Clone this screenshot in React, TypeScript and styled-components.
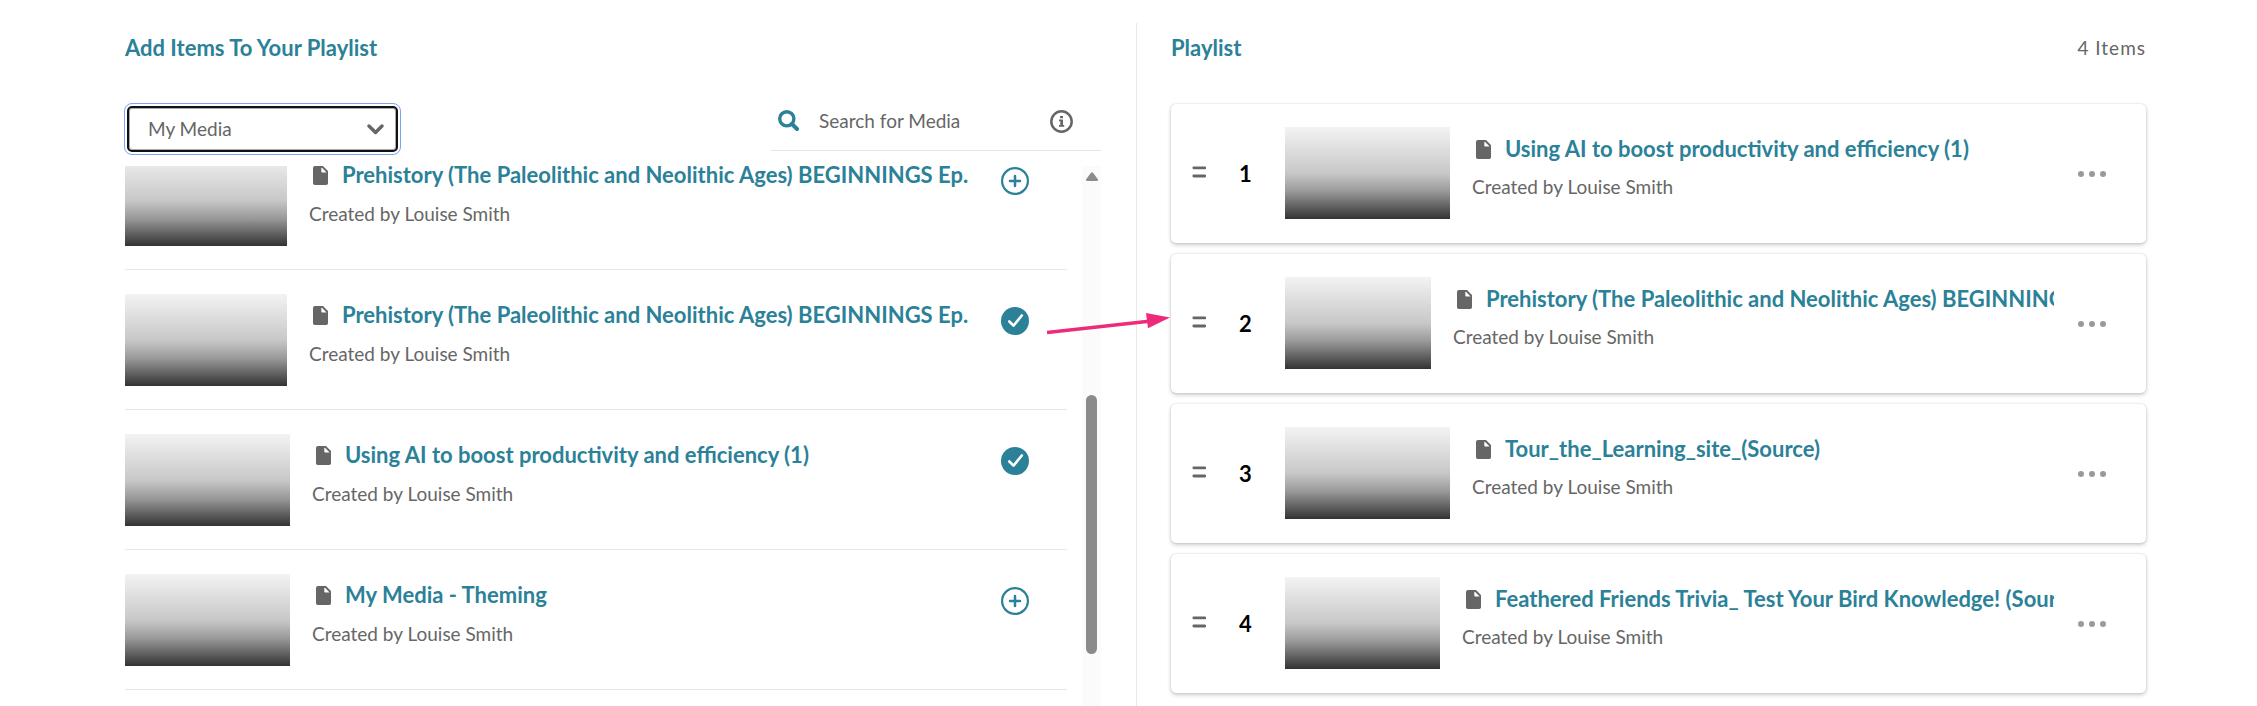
import React from "react";
import styled, { createGlobalStyle } from "styled-components";

const GlobalStyle = createGlobalStyle`
  * { box-sizing: border-box; }
  body {
    margin: 0;
    background: #fff;
    color: #666;
    font-family: Lato, "Liberation Sans", sans-serif;
    font-size: 19px;
    line-height: 24px;
  }
  button, input, select { font: inherit; color: inherit; }
`;

const teal = "#2b8198";
const line = "#e8e8e8";

const Page = styled.main`
  display: grid;
  grid-template-columns: minmax(0, 1fr) minmax(0, 1fr);
  min-height: 100vh;
  padding: 23px 110px 0 125px;
`;

const LibraryPane = styled.section`
  position: relative;
  display: flex;
  flex-direction: column;
  padding-right: 35px;
`;

const PlaylistPane = styled.section`
  border-left: 1px solid ${line};
  padding: 0 1px 13px 34px;
`;

const PaneHeader = styled.header`
  display: flex;
  align-items: flex-start;
  justify-content: space-between;
  height: 81px;
  padding-top: 11px;
`;

const Heading = styled.h2`
  margin: 0;
  color: ${teal};
  font-size: 22px;
  line-height: 28px;
`;

const ItemCount = styled.span`
  line-height: 28px;
  letter-spacing: 1px;
`;

const Toolbar = styled.div`
  display: flex;
  justify-content: space-between;
  align-items: flex-start;
  height: 62px;
`;

const SourcePicker = styled.label`
  position: relative;
  display: block;
  width: 271px;
  height: 46px;
  margin: 2px 0 0 2px;
`;

const SourceSelect = styled.select`
  display: block;
  width: 100%;
  height: 100%;
  padding: 0 19px;
  appearance: none;
  background: #fff;
  border: 2px solid #111;
  border-radius: 5px;
  box-shadow: inset 0 0 0 1px #aaa;
  outline: 1px solid #7ba4f5;
  outline-offset: 2px;
`;

const PickerChevron = styled.svg`
  position: absolute;
  right: 14px;
  top: 18px;
  pointer-events: none;
`;

const SearchBox = styled.label`
  display: flex;
  align-items: center;
  width: 330px;
  height: 47px;
  padding: 0 28px 12px 7px;
  border-bottom: 1px solid ${line};
`;

const SearchInput = styled.input`
  flex: 1;
  min-width: 0;
  margin-left: 20px;
  padding: 0;
  border: 0;
  outline: 0;
  background: transparent;
  &::placeholder { color: #666; opacity: 1; }
`;

const PlainButton = styled.button`
  display: flex;
  flex: none;
  padding: 0;
  border: 0;
  background: none;
  cursor: pointer;
`;

const LibraryBody = styled.div`
  display: flex;
  flex: 1;
  justify-content: space-between;
`;

const MediaViewport = styled.div`
  flex: 1;
  min-width: 0;
  margin-right: 15px;
  overflow: hidden;
`;

const MediaList = styled.ul`
  margin: -36px 0 0;
  padding: 0;
  list-style: none;
`;

const MediaRow = styled.li`
  display: flex;
  align-items: flex-start;
  padding: 24px 38px 23px 0;
  border-bottom: 1px solid ${line};
`;

const Thumb = styled.div<{ $w: number }>`
  flex: none;
  width: ${(p) => p.$w}px;
  height: 92px;
  background: linear-gradient(#f3f3f3 0%, #c8c8c8 50%, #999 70%, #333 100%);
`;

const Details = styled.div`
  flex: 1;
  min-width: 0;
  margin-left: 22px;
  padding-top: 7px;
`;

const TitleLine = styled.h3`
  display: flex;
  align-items: center;
  gap: 14px;
  margin: 0;
  padding-left: 4px;
  font-size: 22px;
  line-height: 28px;
`;

const TitleLink = styled.a`
  flex: 1;
  min-width: 0;
  overflow: hidden;
  white-space: nowrap;
  color: ${teal};
  text-decoration: none;
`;

const Author = styled.p`
  margin: 13px 0 0;
`;

const ToggleButton = styled(PlainButton)`
  margin: 13px 0 0 24px;
`;

const ScrollTrack = styled.div`
  display: flex;
  flex-direction: column;
  align-items: center;
  width: 19px;
  padding-top: 6px;
  background: #fbfbfb;
`;

const ScrollThumb = styled.div`
  width: 11px;
  height: 259px;
  margin-top: 214px;
  border-radius: 6px;
  background: #8b8b8b;
`;

const CardList = styled.ol`
  display: flex;
  flex-direction: column;
  gap: 11px;
  margin: 0;
  padding: 0;
  list-style: none;
`;

const Card = styled.li`
  display: flex;
  align-items: flex-start;
  padding: 23px 40px 24px 21px;
  border-radius: 5px;
  background: #fff;
  box-shadow: 0 2px 4px rgba(0, 0, 0, 0.2), 0 0 2px rgba(0, 0, 0, 0.16);
`;

const DragButton = styled(PlainButton)`
  margin-top: 39px;
  cursor: grab;
`;

const Position = styled.span`
  width: 79px;
  padding-top: 33px;
  text-align: center;
  color: #000;
  font-size: 22px;
  font-weight: 700;
  line-height: 28px;
`;

const CardDetails = styled(Details)`
  padding-top: 8px;
`;

const CardAuthor = styled(Author)`
  margin-top: 12px;
`;

const MoreButton = styled(PlainButton)`
  margin: 44px 0 0 24px;
`;

const Arrow = styled.svg`
  position: absolute;
  right: -36px;
  top: 284px;
  pointer-events: none;
`;

const FileGlyph = styled.svg`
  flex: none;
`;

const FileIcon = () => (
  <FileGlyph width="15" height="19" viewBox="0 0 15 19" aria-hidden="true">
    <path fill="#666" fillRule="evenodd" d="M2 0h8l5 5v12.200a1.800 1.800 0 0 1-1.800 1.800H1.800A1.800 1.800 0 0 1 0 17.200V2A2 2 0 0 1 2 0Zm6.300 2v3.200c0 .8.500 1.300 1.300 1.300h4L9 1.800Z" />
  </FileGlyph>
);

const AddIcon = () => (
  <svg width="28" height="28" viewBox="0 0 28 28" fill="none" stroke={teal} strokeWidth="2.200" aria-hidden="true">
    <circle cx="14" cy="14" r="12.900" />
    <path d="M14 9v10M9 14h10" strokeWidth="2.500" strokeLinecap="round" />
  </svg>
);

const AddedIcon = () => (
  <svg width="28" height="28" viewBox="0 0 28 28" fill="none" aria-hidden="true">
    <circle cx="14" cy="14" r="14" fill={teal} />
    <path d="M8.300 14.500l4.200 4.200 8.300-10.200" stroke="#fff" strokeWidth="2.600" strokeLinecap="round" strokeLinejoin="round" />
  </svg>
);

const library = [
  { title: "Prehistory (The Paleolithic and Neolithic Ages) BEGINNINGS Ep.", w: 162, added: false },
  { title: "Prehistory (The Paleolithic and Neolithic Ages) BEGINNINGS Ep.", w: 162, added: true },
  { title: "Using AI to boost productivity and efficiency (1)", w: 165, added: true },
  { title: "My Media - Theming", w: 165, added: false },
];

const playlist = [
  { title: "Using AI to boost productivity and efficiency (1)", w: 165 },
  { title: "Prehistory (The Paleolithic and Neolithic Ages) BEGINNINGS", w: 146 },
  { title: "Tour_the_Learning_site_(Source)", w: 165 },
  { title: "Feathered Friends Trivia_ Test Your Bird Knowledge! (Source)", w: 155 },
];

export default function App() {
  return (
    <>
      <GlobalStyle />
      <Page>
        <LibraryPane>
          <PaneHeader>
            <Heading>Add Items To Your Playlist</Heading>
          </PaneHeader>
          <Toolbar>
            <SourcePicker>
              <SourceSelect aria-label="Media source" defaultValue="My Media">
                <option>My Media</option>
              </SourceSelect>
              <PickerChevron width="17" height="11" viewBox="0 0 17 11" fill="none" aria-hidden="true">
                <path d="M2 2l6.500 6.500L15 2" stroke="#666" strokeWidth="3.400" strokeLinecap="round" strokeLinejoin="round" />
              </PickerChevron>
            </SourcePicker>
            <SearchBox>
              <svg width="21" height="22" viewBox="0 0 21 22" fill="none" stroke={teal} strokeWidth="3.400" aria-hidden="true">
                <circle cx="8.800" cy="8.800" r="7.100" />
                <path d="M14 14l5 5" strokeWidth="4" strokeLinecap="round" />
              </svg>
              <SearchInput type="search" placeholder="Search for Media" aria-label="Search for Media" />
              <PlainButton type="button" aria-label="Search information">
                <svg width="23" height="23" viewBox="0 0 23 23" aria-hidden="true">
                  <circle cx="11.500" cy="11.500" r="10.200" fill="none" stroke="#666" strokeWidth="2.500" />
                  <path fill="#666" d="M10 6h3v2.200h-3zM9 9.500h4v5.500h1.200v1.700H9V15h1.300v-3.800H9z" />
                </svg>
              </PlainButton>
            </SearchBox>
          </Toolbar>
          <LibraryBody>
            <MediaViewport>
              <MediaList>
                {library.map((item, i) => (
                  <MediaRow key={i}>
                    <Thumb $w={item.w} />
                    <Details>
                      <TitleLine>
                        <FileIcon />
                        <TitleLink href="#">{item.title}</TitleLink>
                      </TitleLine>
                      <Author>Created by Louise Smith</Author>
                    </Details>
                    <ToggleButton type="button" aria-label={item.added ? "Remove from playlist" : "Add to playlist"}>
                      {item.added ? <AddedIcon /> : <AddIcon />}
                    </ToggleButton>
                  </MediaRow>
                ))}
              </MediaList>
            </MediaViewport>
            <ScrollTrack aria-hidden="true">
              <svg width="12" height="9" viewBox="0 0 12 9">
                <path d="M5 .8Q6-.4 7 .8L11.700 7Q12.400 9 11 9H1Q-.4 9 .3 7Z" fill="#8b8b8b" />
              </svg>
              <ScrollThumb />
            </ScrollTrack>
          </LibraryBody>
          <Arrow width="125" height="30" viewBox="0 0 125 30" aria-hidden="true">
            <path d="M0 25.500L102 14.200" stroke="#ed2b7b" strokeWidth="3.600" />
            <path d="M99 6L123 10.500L101 21.300Z" fill="#ed2b7b" />
          </Arrow>
        </LibraryPane>
        <PlaylistPane>
          <PaneHeader>
            <Heading>Playlist</Heading>
            <ItemCount>4 Items</ItemCount>
          </PaneHeader>
          <CardList>
            {playlist.map((item, i) => (
              <Card key={item.title}>
                <DragButton type="button" aria-label={`Reorder item ${i + 1}`}>
                  <svg width="14" height="12" viewBox="0 0 14 12" stroke="#666" strokeWidth="2.800" strokeLinecap="round" aria-hidden="true">
                    <path d="M1.800 1.800h11M1.800 10h11" />
                  </svg>
                </DragButton>
                <Position>{i + 1}</Position>
                <Thumb $w={item.w} />
                <CardDetails>
                  <TitleLine>
                    <FileIcon />
                    <TitleLink href="#">{item.title}</TitleLink>
                  </TitleLine>
                  <CardAuthor>Created by Louise Smith</CardAuthor>
                </CardDetails>
                <MoreButton type="button" aria-label="More actions">
                  <svg width="28" height="6" viewBox="0 0 28 6" fill="#999" aria-hidden="true">
                    <circle cx="3" cy="3" r="3" />
                    <circle cx="14" cy="3" r="3" />
                    <circle cx="25" cy="3" r="3" />
                  </svg>
                </MoreButton>
              </Card>
            ))}
          </CardList>
        </PlaylistPane>
      </Page>
    </>
  );
}
